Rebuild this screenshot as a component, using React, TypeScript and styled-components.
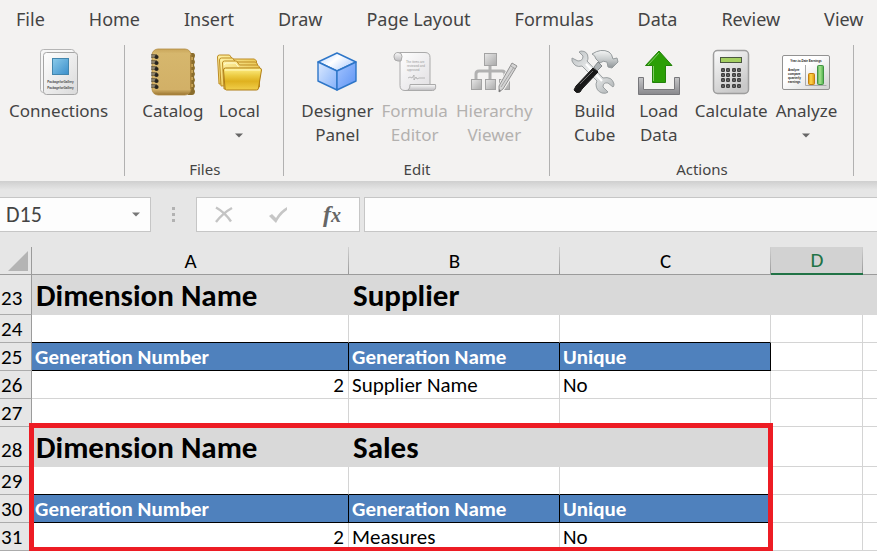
import React from "react";
import styled, { createGlobalStyle, css } from "styled-components";

const GlobalStyle = createGlobalStyle`
  * { box-sizing: border-box; }
  body { margin: 0; background: #fff; overflow: hidden; }
  button, input { font: inherit; color: inherit; margin: 0; border: 0; background: none; }
`;

const uiFont = `"Noto Sans", "Open Sans", sans-serif`;
const cellFont = `Carlito, Lato, sans-serif`;

const Page = styled.main`
  font-family: ${uiFont};
  color: #444;
  background: #e6e6e6;
`;

/* ---------- Ribbon ---------- */

const RibbonShell = styled.header`
  background: #f3f2f1;
  padding-bottom: 5px;
`;

const TabBar = styled.nav`
  display: flex;
  gap: 44px;
  height: 38px;
  padding: 0 16px;
  align-items: center;
`;

const Tab = styled.button`
  padding: 0;
  font-size: 18px;
  line-height: 24px;
  white-space: nowrap;
`;

const Groups = styled.div`
  display: flex;
  padding-top: 7px;
`;

const Group = styled.section<{ $first?: boolean }>`
  display: flex;
  flex-direction: column;
  justify-content: space-between;
  min-height: 131px;
  padding: 0 16px 0 ${(p) => (p.$first ? "9px" : "17px")};
  border-right: 1px solid #b1b1b1;
`;

const GroupItems = styled.div`
  display: flex;
  gap: 8px;
`;

const GroupLabel = styled.div`
  height: 16px;
  font-size: 15px;
  line-height: 18px;
  text-align: center;
`;

const Command = styled.button`
  display: flex;
  flex-direction: column;
  align-items: center;
  min-width: 56px;
  padding: 0;
  font-size: 17px;
  line-height: 24px;
  &:disabled { color: #b3b1af; }
`;

const IconSlot = styled.span`
  display: flex;
  height: 54px;
  align-items: center;
`;

const Caret = styled.svg`
  display: block;
  width: 8px;
  height: 5px;
`;

const CaretLine = styled.span`
  display: flex;
  height: 24px;
  align-items: center;
`;

/* ---------- Formula bar ---------- */

const FormulaBar = styled.div`
  display: flex;
  padding: 16px 0 15px;
  background: linear-gradient(#cfcfcf, #e6e6e6 9px);
`;

const NameBox = styled.div`
  display: flex;
  width: 151px;
  height: 35px;
  align-items: center;
  background: #fdfdfd;
  border: 1px solid #c6c6c6;
  border-left: 0;
`;

const NameInput = styled.input`
  flex: 1;
  min-width: 0;
  padding: 0 6px;
  font-family: ${cellFont};
  font-size: 22px;
  outline: 0;
`;

const BarButton = styled.button`
  display: flex;
  flex: 1;
  height: 100%;
  padding: 0;
  align-items: center;
  justify-content: center;
`;

const NameToggle = styled(BarButton)`
  flex: 0 0 28px;
`;

const Grip = styled.div`
  display: flex;
  flex-direction: column;
  width: 45px;
  gap: 3px;
  align-items: center;
  justify-content: center;
`;

const Dot = styled.i`
  width: 3px;
  height: 3px;
  background: #b2b2b2;
`;

const EditButtons = styled.div`
  display: flex;
  width: 164px;
  height: 35px;
  background: #fdfdfd;
  border: 1px solid #c6c6c6;
`;

const FxLabel = styled.span`
  font: italic bold 24px/32px "Liberation Serif", serif;
  color: #666;
  small { font-size: 20px; }
`;

const FormulaInput = styled.input`
  flex: 1;
  min-width: 0;
  height: 35px;
  margin-left: 4px;
  padding: 0 6px;
  background: #fdfdfd;
  border: 1px solid #c6c6c6;
  border-right: 0;
`;

/* ---------- Sheet ---------- */

const SheetArea = styled.div`
  position: relative;
`;

const Grid = styled.table`
  width: 100%;
  table-layout: fixed;
  border-collapse: separate;
  border-spacing: 0;
  font-family: ${cellFont};
  font-size: 21px;
  line-height: 26px;
  color: #000;
  tr > :last-child { border-right: 0; }
`;

const Col = styled.col<{ $w?: number }>`
  width: ${(p) => (p.$w ? `${p.$w}px` : "auto")};
`;

const ColumnHead = styled.th<{ $active?: boolean }>`
  height: 28px;
  padding: 1px 0 0;
  font-weight: 400;
  border-bottom: 1px solid #9b9b9b;
  background: linear-gradient(#d0d0d0, #999) right / 1px 100% no-repeat #e6e6e6;
  &:last-child { background: #e6e6e6; }
  ${(p) =>
    p.$active &&
    css`
      color: #217346;
      line-height: 25px;
      border-bottom: 2px solid #217346;
      background-color: #d2d2d2;
    `}
`;

const Corner = styled.th`
  height: 28px;
  padding: 0 3px 3px 0;
  vertical-align: bottom;
  border-bottom: 1px solid #9b9b9b;
  border-right: 1px solid #9b9b9b;
  background: #e6e6e6;
  svg { display: block; margin-left: auto; }
`;

const RowHead = styled.th<{ $tall?: boolean }>`
  padding: 0 0 ${(p) => (p.$tall ? 3 : 0)}px 1px;
  font-weight: 400;
  text-align: left;
  vertical-align: bottom;
  background: #e6e6e6;
  border-right: 1px solid #9b9b9b;
  border-bottom: 1px solid #ababab;
`;

type Kind = "plain" | "title" | "head";

const Cell = styled.td<{ $kind: Kind; $right?: boolean; $underline?: boolean }>`
  padding: 0 4px 0 3px;
  vertical-align: bottom;
  white-space: nowrap;
  text-align: ${(p) => (p.$right ? "right" : "left")};
  border-right: 1px solid #d4d4d4;
  border-bottom: 1px solid ${(p) => (p.$underline ? "#000" : "#d4d4d4")};
  background: #fff;
  ${(p) =>
    p.$kind === "title" &&
    css`
      padding: 0 4px 1px;
      font-size: 31px;
      font-weight: 700;
      line-height: 36px;
      background: #d9d9d9;
      border-color: #d9d9d9;
    `}
  ${(p) =>
    p.$kind === "head" &&
    css`
      font-weight: 700;
      color: #fff;
      background: #4f81bd;
      border-color: #000;
    `}
`;

const Row = styled.tr<{ $tall?: boolean }>`
  height: ${(p) => (p.$tall ? 40 : 28)}px;
`;

const Highlight = styled.div`
  position: absolute;
  top: 176px;
  left: 29px;
  width: 744px;
  height: 128px;
  border: 5px solid #ed1c24;
  border-bottom-width: 4px;
  pointer-events: none;
`;

/* ---------- Icons ---------- */

const DownCaret = ({ color = "#666" }: { color?: string }) => (
  <Caret viewBox="0 0 8 5"><path d="M0 .5h8L4 4.5z" fill={color} /></Caret>
);

const ConnectionsIcon = () => (
  <svg width="40" height="48" viewBox="0 0 40 48">
    <defs>
      <linearGradient id="cnPage" x2="1" y2="1"><stop stopColor="#fff" /><stop offset="1" stopColor="#dadada" /></linearGradient>
      <linearGradient id="cnBlue" x2="1" y2="1"><stop stopColor="#8bcbea" /><stop offset="1" stopColor="#3b8fcb" /></linearGradient>
    </defs>
    <rect x="1.5" y="1.5" width="34" height="43" rx="3" fill="#f7f7f7" stroke="#b5b5b5" />
    <rect x="4.5" y="4.5" width="34" height="42" rx="3" fill="url(#cnPage)" stroke="#a6a6a6" />
    <rect x="13.5" y="10.5" width="16" height="16" fill="url(#cnBlue)" stroke="#4386ad" />
    <g fill="#444" fontFamily="Liberation Sans" fontSize="3" fontWeight="700" textAnchor="middle">
      <text x="21.5" y="35">PackageforGallery</text>
      <text x="21.5" y="41">PackageforGallery</text>
    </g>
  </svg>
);

const CatalogIcon = () => (
  <svg width="46" height="48" viewBox="0 0 46 48">
    <defs>
      <linearGradient id="ctBook" x2="0" y2="1"><stop stopColor="#c9a65a" /><stop offset=".1" stopColor="#d6b76d" /><stop offset=".88" stopColor="#d2b067" /><stop offset="1" stopColor="#9a7430" /></linearGradient>
    </defs>
    <path d="M38 5h5q2 0 2 3l-1 3 1 3-1 3 1 3-1 3 1 3-1 3 1 3-1 3 1 3-1 3 1 2q0 4-3 4h-4z" fill="#8a6d2c" />
    <path d="M42 9v3M42 16v3M42 22v3M42 29v3M42 36v3" stroke="#c7a456" strokeWidth="2" />
    <rect x="2" y="1" width="39" height="46" rx="6" fill="url(#ctBook)" stroke="#b18c42" strokeWidth=".8" />
    <path d="M40.5 7v34" stroke="#a9843b" />
    {[8, 14, 20, 26, 32, 38].map((y) => (
      <g key={y}>
        <circle cx="6.5" cy={y + 1} r="2.1" fill="#27231c" />
        <path d={`M1 ${y - 1}h6M1 ${y + 1}h5`} stroke="#2b2b2b" strokeWidth="1.2" />
        <path d={`M1 ${y}h4`} stroke="#bbb" strokeWidth=".6" />
      </g>
    ))}
  </svg>
);

const FolderIcon = () => (
  <svg width="46" height="48" viewBox="0 0 46 48">
    <defs>
      <linearGradient id="fdBack" x2="1" y2="1"><stop stopColor="#fff3a5" /><stop offset="1" stopColor="#dfb02a" /></linearGradient>
      <linearGradient id="fdFront" x2="0" y2="1"><stop stopColor="#fff08a" /><stop offset=".35" stopColor="#eccb42" /><stop offset=".6" stopColor="#dfb11f" /><stop offset="1" stopColor="#f1cf4b" /></linearGradient>
    </defs>
    <g fill="url(#fdBack)" stroke="#bd8c24">
      <path d="M3 36 1.5 9q0-2 2-2h10l3 4h22l2 2v22z" />
      <path d="M5 38 3.500 12q0-2 2-2h11l3 4h20l2 2v20z" />
      <path d="M8 41 6.500 15q0-2 2-2h12l3 4h18l2 2v20z" />
    </g>
    <path d="M8.5 17q0-2 2-2h9l3 4" fill="none" stroke="#fffbd0" />
    <path d="M9 40 7.500 22q0-2 2-2h34q2 0 2 2l-3 18q0 2-2 2h-30q-1.500 0-1.500-2z" fill="url(#fdFront)" stroke="#b07d14" />
    <path d="M9 22h35" stroke="#fff8bd" />
  </svg>
);

const CubeIcon = () => (
  <svg width="42" height="48" viewBox="0 0 42 48">
    <defs>
      <linearGradient id="cuTop" x2="1" y2=".6"><stop offset=".2" stopColor="#cfe2ff" /><stop offset=".5" stopColor="#fff" /><stop offset="1" stopColor="#b5d2ff" /></linearGradient>
      <linearGradient id="cuL" x2="1" y2="1"><stop stopColor="#dceaff" /><stop offset="1" stopColor="#83b0fa" /></linearGradient>
      <linearGradient id="cuR" x2="1" y2="1"><stop stopColor="#a4c5ff" /><stop offset="1" stopColor="#5c92f3" /></linearGradient>
    </defs>
    <g stroke="#2d76c8" strokeWidth="1.4" strokeLinejoin="round">
      <path d="M21 5 40 14 21 23 2 14z" fill="url(#cuTop)" />
      <path d="M2 14l19 9v19L2 33z" fill="url(#cuL)" />
      <path d="M40 14l-19 9v19l19-9z" fill="url(#cuR)" />
    </g>
  </svg>
);

const ScrollIcon = () => (
  <svg width="44" height="48" viewBox="0 0 44 48">
    <defs>
      <linearGradient id="scPage" x2="1" y2="1"><stop stopColor="#fff" /><stop offset="1" stopColor="#e1dfe2" /></linearGradient>
      <linearGradient id="scRoll" x2="0" y2="1"><stop stopColor="#fafafa" /><stop offset="1" stopColor="#bdbcbf" /></linearGradient>
    </defs>
    <path d="M5 4.5h27q5 0 5 5V40l-20 2.500h-5q-5 0-5-5V13z" fill="url(#scPage)" stroke="#aaa" />
    <path d="M8 13H5q-4 0-4-4 0-4.500 4-4.500 4 0 4 4z" fill="url(#scRoll)" stroke="#aaa" />
    <path d="M13 42.5q4 0 4-6h25.500q1 6-3 6z" fill="url(#scRoll)" stroke="#aaa" />
    <g fill="#999" fontFamily="Liberation Sans" fontSize="3">
      <text x="13" y="15">The items are</text>
      <text x="14" y="19">reviewed and</text>
      <text x="14" y="23">approved</text>
    </g>
    <path d="M15 30l2-1 2 1 2-3v5l2-3 1 2 2-1h6" fill="none" stroke="#aaa" strokeWidth=".8" />
  </svg>
);

const HierarchyIcon = () => (
  <svg width="48" height="48" viewBox="0 0 48 48">
    <defs>
      <linearGradient id="hiBox" x2="1" y2="1"><stop stopColor="#e8e8e8" /><stop offset="1" stopColor="#a9a9a9" /></linearGradient>
    </defs>
    <path d="M20 17v14M6 31v-5q0-3 3-3h23q3 0 3 3v5" fill="none" stroke="#b1b1b1" strokeWidth="3" />
    <g fill="url(#hiBox)" stroke="#a3a3a3">
      <rect x="14.5" y="5.5" width="12" height="12" />
      <rect x="1.5" y="31.5" width="10" height="10" />
      <rect x="15.5" y="31.5" width="10" height="10" />
      <rect x="29.5" y="31.5" width="10" height="10" />
    </g>
    <path d="M42 15l5 3-14 23-5 4 1-6z" fill="#dadada" stroke="#f3f2f1" strokeWidth="3" />
    <path d="M42 15l5 3-14 23-4 3 0-6z" fill="#d5d5d5" stroke="#929292" />
    <path d="M44 19 31 39M41 18l4 3" stroke="#a5a5a5" fill="none" />
    <path d="M29 41v3l2-1z" fill="#777" />
  </svg>
);

const ToolsIcon = () => (
  <svg width="48" height="48" viewBox="0 0 48 48">
    <defs>
      <linearGradient id="tlSteel" x2="1" y2="1"><stop stopColor="#b9bec0" /><stop offset=".5" stopColor="#f5f6f6" /><stop offset="1" stopColor="#a9aeb0" /></linearGradient>
      <linearGradient id="tlHead" x2="0" y2="1"><stop stopColor="#f4f5f5" /><stop offset=".5" stopColor="#c9cdce" /><stop offset="1" stopColor="#8e9497" /></linearGradient>
      <linearGradient id="tlGrip" x2="1" y2="1"><stop stopColor="#555" /><stop offset=".5" stopColor="#171717" /><stop offset="1" stopColor="#333" /></linearGradient>
    </defs>
    <path
      d="M10 3Q17 3 17 10q0 2-1 3l16 17q9-2 11 6 0 2-1 3l-5-4q-5-1-5 4l5 5q-2 2-6 1-6-2-6-9l1-3L11 18q-7 2-10-5l0-3 6 3q5 0 5-5L8 4z"
      fill="url(#tlSteel)"
      stroke="#9a9fa1"
    />
    <path d="M15 16 31 33" stroke="#fff" strokeWidth="2" />
    <path
      d="M21 6Q30 0 38 4q3 2 4 7l4-1 1 4-6 6-4-1-1-5q-4-2-7 1l-4-4q-1-4-4-5z"
      fill="url(#tlHead)"
      stroke="#959b9d"
      strokeLinejoin="round"
    />
    <path d="M27 14l4 4-5 5-3-4z" fill="#aeb3b5" stroke="#6f7577" strokeWidth=".8" />
    <path d="M22 20l5 4L11 41l-2 3q-4 2-6-2l2-4z" fill="url(#tlGrip)" stroke="#171717" strokeLinejoin="round" />
    <path d="M9 36 22 23" stroke="#707070" />
  </svg>
);

const LoadIcon = () => (
  <svg width="44" height="48" viewBox="0 0 44 48">
    <defs>
      <linearGradient id="ldTray" x2="0" y2="1"><stop stopColor="#c6c6c8" /><stop offset="1" stopColor="#88888c" /></linearGradient>
    </defs>
    <path d="M1.5 29.5h5v12h31v-12h5v17h-41z" fill="url(#ldTray)" stroke="#77777b" />
    <path d="M22 3 35 17.500h-6.500V34.500h-13V17.500H8.500z" fill="#2b9f06" stroke="#23810b" />
    <path d="M22 5 11 17M16.500 18v15" stroke="#80ce64" fill="none" />
  </svg>
);

const CalculatorIcon = () => (
  <svg width="38" height="48" viewBox="0 0 38 48">
    <defs>
      <linearGradient id="caBody" x2=".5" y2="1"><stop stopColor="#fbfbfb" /><stop offset="1" stopColor="#c9c9c9" /></linearGradient>
    </defs>
    <rect x="1.5" y="2.500" width="35" height="43" rx="4" fill="url(#caBody)" stroke="#9d9d9d" strokeWidth="1.5" />
    <rect x="8.5" y="9.5" width="21" height="5" fill="#a5d062" stroke="#4b5840" />
    {[22, 27, 32, 38].map((y) =>
      [11, 16, 22, 27].map((x) => <rect key={`${x}-${y}`} x={x - 2} y={y - 2} width="4" height="4" rx="1.3" fill="#3e3e3e" />),
    )}
    {[22, 27, 32, 38].map((y) =>
      [11, 16, 22, 27].map((x) => <circle key={`${x}-${y}`} cx={x} cy={y} r=".5" fill="#ddd" />),
    )}
  </svg>
);

const ChartIcon = () => (
  <svg width="50" height="48" viewBox="0 0 50 48">
    <defs>
      <linearGradient id="chPage" x2="1" y2="1"><stop offset=".4" stopColor="#fff" /><stop offset="1" stopColor="#d0d0d0" /></linearGradient>
      <linearGradient id="chGreen"><stop stopColor="#55a453" /><stop offset=".4" stopColor="#a4e58e" /><stop offset="1" stopColor="#4ead4b" /></linearGradient>
      <linearGradient id="chGold"><stop stopColor="#d99a12" /><stop offset=".4" stopColor="#ffd54c" /><stop offset="1" stopColor="#dc9510" /></linearGradient>
    </defs>
    <rect x="1.5" y="7.5" width="47" height="34" rx="1.5" fill="url(#chPage)" stroke="#929292" />
    <g fill="#222" fontFamily="Liberation Sans" fontSize="3" fontWeight="700">
      <text x="25" y="14" textAnchor="middle">Year-to-Date Earnings</text>
      <text x="7" y="23">Analyze</text>
      <text x="7" y="27">compare</text>
      <text x="7" y="31">quarterly</text>
      <text x="7" y="35">earnings</text>
    </g>
    <path d="M24.5 17v20.500h21" fill="none" stroke="#aaa" />
    <rect x="27.5" y="25.5" width="6" height="11" rx="1" fill="url(#chGold)" stroke="#c47e0e" />
    <rect x="36.5" y="17.5" width="6" height="19" rx="1" fill="url(#chGreen)" stroke="#3f9442" />
  </svg>
);

/* ---------- Data ---------- */

type CommandSpec = { icon: React.ReactNode; lines: string[]; menu?: boolean; disabled?: boolean };
type GroupSpec = { label: string; items: CommandSpec[] };

const tabs = ["File", "Home", "Insert", "Draw", "Page Layout", "Formulas", "Data", "Review", "View"];

const groups: GroupSpec[] = [
  { label: "", items: [{ icon: <ConnectionsIcon />, lines: ["Connections"] }] },
  {
    label: "Files",
    items: [
      { icon: <CatalogIcon />, lines: ["Catalog"] },
      { icon: <FolderIcon />, lines: ["Local"], menu: true },
    ],
  },
  {
    label: "Edit",
    items: [
      { icon: <CubeIcon />, lines: ["Designer", "Panel"] },
      { icon: <ScrollIcon />, lines: ["Formula", "Editor"], disabled: true },
      { icon: <HierarchyIcon />, lines: ["Hierarchy", "Viewer"], disabled: true },
    ],
  },
  {
    label: "Actions",
    items: [
      { icon: <ToolsIcon />, lines: ["Build", "Cube"] },
      { icon: <LoadIcon />, lines: ["Load", "Data"] },
      { icon: <CalculatorIcon />, lines: ["Calculate"] },
      { icon: <ChartIcon />, lines: ["Analyze"], menu: true },
    ],
  },
];

type RowSpec = { n: number; kind: Kind; span: number; values: string[]; underline?: boolean };

const rows: RowSpec[] = [
  { n: 23, kind: "title", span: 5, values: ["Dimension Name", "Supplier"] },
  { n: 24, kind: "plain", span: 0, values: [], underline: true },
  { n: 25, kind: "head", span: 3, values: ["Generation Number", "Generation Name", "Unique"] },
  { n: 26, kind: "plain", span: 0, values: ["2", "Supplier Name", "No"] },
  { n: 27, kind: "plain", span: 0, values: [] },
  { n: 28, kind: "title", span: 3, values: ["Dimension Name", "Sales"] },
  { n: 29, kind: "plain", span: 0, values: [], underline: true },
  { n: 30, kind: "head", span: 3, values: ["Generation Number", "Generation Name", "Unique"] },
  { n: 31, kind: "plain", span: 0, values: ["2", "Measures", "No"] },
];

const Ribbon = () => (
  <RibbonShell>
    <TabBar>{tabs.map((t) => <Tab key={t}>{t}</Tab>)}</TabBar>
    <Groups>
      {groups.map((g, i) => (
        <Group key={i} $first={i === 0}>
          <GroupItems>
            {g.items.map((c) => (
              <Command key={c.lines[0]} disabled={c.disabled}>
                <IconSlot>{c.icon}</IconSlot>
                {c.lines.map((l) => <span key={l}>{l}</span>)}
                {c.menu && <CaretLine><DownCaret /></CaretLine>}
              </Command>
            ))}
          </GroupItems>
          <GroupLabel>{g.label}</GroupLabel>
        </Group>
      ))}
    </Groups>
  </RibbonShell>
);

const FormulaStrip = () => (
  <FormulaBar>
    <NameBox>
      <NameInput aria-label="Name box" defaultValue="D15" />
      <NameToggle aria-label="Show names"><DownCaret color="#777" /></NameToggle>
    </NameBox>
    <Grip><Dot /><Dot /><Dot /></Grip>
    <EditButtons>
      <BarButton aria-label="Cancel">
        <svg width="20" height="20" viewBox="0 0 20 20"><path d="M2 2.5q9 5 15 14M18 3Q9 8 2 17" fill="none" stroke="#c4c4c4" strokeWidth="2.4" /></svg>
      </BarButton>
      <BarButton aria-label="Enter">
        <svg width="20" height="20" viewBox="0 0 20 20"><path d="M1 11l3-2 4 4q4-7 11-11v3Q12 10 8 18z" fill="#c6c6c6" /></svg>
      </BarButton>
      <BarButton aria-label="Insert function"><FxLabel>f<small>x</small></FxLabel></BarButton>
    </EditButtons>
    <FormulaInput aria-label="Formula" />
  </FormulaBar>
);

const Sheet = () => (
  <SheetArea>
    <Grid>
      <colgroup>
        <Col $w={32} /><Col $w={317} /><Col $w={211} /><Col $w={211} /><Col $w={92} /><Col />
      </colgroup>
      <thead>
        <tr>
          <Corner aria-label="Select all">
            <svg width="20" height="20" viewBox="0 0 20 20"><path d="M20 0v20H0z" fill="#b4b4b4" /></svg>
          </Corner>
          <ColumnHead>A</ColumnHead>
          <ColumnHead>B</ColumnHead>
          <ColumnHead>C</ColumnHead>
          <ColumnHead $active>D</ColumnHead>
          <ColumnHead />
        </tr>
      </thead>
      <tbody>
        {rows.map((r) => (
          <Row key={r.n} $tall={r.kind === "title"}>
            <RowHead $tall={r.kind === "title"}>{r.n}</RowHead>
            {[0, 1, 2, 3, 4].map((c) => (
              <Cell
                key={c}
                $kind={c < r.span ? r.kind : "plain"}
                $right={r.values[c] === "2"}
                $underline={r.underline && c < 3}
              >
                {r.values[c]}
              </Cell>
            ))}
          </Row>
        ))}
      </tbody>
    </Grid>
    <Highlight />
  </SheetArea>
);

export default function App() {
  return (
    <Page>
      <GlobalStyle />
      <Ribbon />
      <FormulaStrip />
      <Sheet />
    </Page>
  );
}
